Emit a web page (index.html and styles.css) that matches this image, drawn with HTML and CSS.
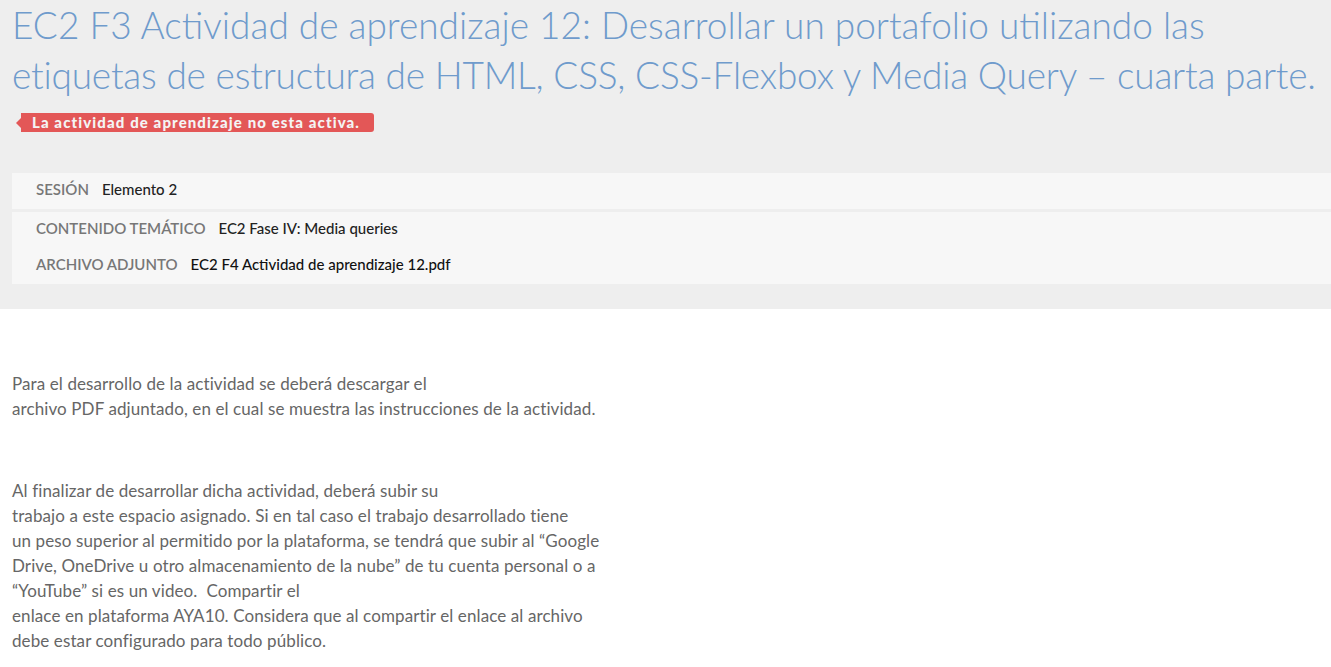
FILE: index.html
```html
<!DOCTYPE html>
<html lang="es">
<head>
<meta charset="utf-8">
<title>EC2 F3 Actividad de aprendizaje 12</title>
<link rel="stylesheet" href="styles.css">
</head>
<body>
<header class="head">
  <h1 class="title">EC2 F3 Actividad de aprendizaje 12: Desarrollar un portafolio utilizando las <span class="tight">etiquetas de estructura de HTML, CSS, CSS-Flexbox y Media Query – cuarta parte.</span></h1>
  <div class="status"><span class="badge">La actividad de aprendizaje no esta activa.</span></div>
  <div class="details">
    <div class="row-group">
      <div class="row"><span class="lbl">SESIÓN</span><span class="val">Elemento 2</span></div>
    </div>
    <div class="row-group">
      <div class="row"><span class="lbl">CONTENIDO TEMÁTICO</span><span class="val">EC2 Fase IV: Media queries</span></div>
      <div class="row"><span class="lbl">ARCHIVO ADJUNTO</span><span class="val file">EC2 F4 Actividad de aprendizaje 12.pdf</span></div>
    </div>
  </div>
</header>
<main class="content">
  <p class="para">Para el desarrollo de la actividad se deberá descargar el<br>archivo PDF adjuntado, en el cual se muestra las instrucciones de la actividad.</p>
  <p class="para">Al finalizar de desarrollar dicha actividad, deberá subir su<br>trabajo a este espacio asignado. Si en tal caso el trabajo desarrollado tiene<br>un peso superior al permitido por la plataforma, se tendrá que subir al “Google<br>Drive, OneDrive u otro almacenamiento de la nube” de tu cuenta personal o a<br>“YouTube” si es un video.&nbsp; Compartir el<br>enlace en plataforma AYA10. Considera que al compartir el enlace al archivo<br>debe estar configurado para todo público.</p>
</main>
</body>
</html>
```
FILE: styles.css
```css
html, body {
  margin: 0;
  padding: 0;
  background: #fff;
  font-family: Lato, "Open Sans", sans-serif;
}

.head {
  background: #eeeeee;
  padding: 0 0 25px 12px;
}

.title {
  margin: 0;
  font-size: 37px;
  font-weight: 300;
  line-height: 50px;
  color: #6f9bcc;
  width: 1319px;
}

.tight {
  letter-spacing: -0.2px;
  white-space: nowrap;
}

.status {
  display: flex;
  margin-top: 13px;
  padding-left: 9px;
}

.badge {
  position: relative;
  display: inline-block;
  background: #e35757;
  color: #f4f4f4;
  font-size: 15px;
  font-weight: 900;
  line-height: 19px;
  height: 19px;
  padding: 0 14px 0 11px;
  border-radius: 0 3px 3px 0;
  letter-spacing: 1.1px;
}

.badge::before {
  content: "";
  position: absolute;
  left: -5px;
  top: 5px;
  border-top: 5px solid transparent;
  border-bottom: 5px solid transparent;
  border-right: 5px solid #e35757;
}

.details {
  margin-top: 41px;
  display: flex;
  flex-direction: column;
  gap: 3px;
}

.row-group {
  background: #f7f7f7;
  padding-left: 24px;
}

.row {
  box-sizing: border-box;
  display: flex;
  align-items: center;
  height: 36px;
  padding-bottom: 4px;
  gap: 13px;
  font-size: 15px;
}

.lbl {
  color: #777777;
  font-weight: 600;
}

.val {
  color: #222222;
  font-weight: 500;
}

.val.file {
  color: #111111;
}

.content {
  padding: 62px 12px 0 12px;
}

.para {
  margin: 0 0 57px 0;
  font-size: 17px;
  line-height: 25px;
  letter-spacing: 0.1px;
  color: #666666;
}
```
